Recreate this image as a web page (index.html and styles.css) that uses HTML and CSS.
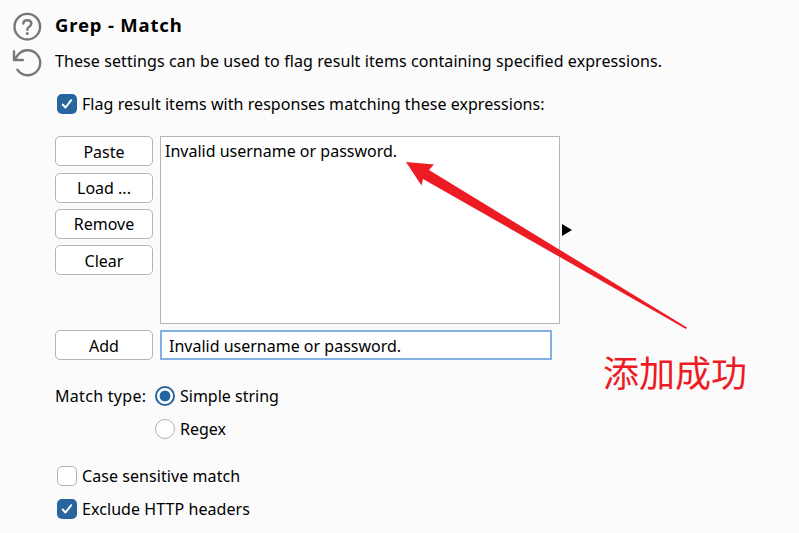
FILE: index.html
```html
<!DOCTYPE html>
<html lang="en">
<head>
<meta charset="utf-8">
<title>Grep - Match</title>
<link rel="stylesheet" href="styles.css">
</head>
<body>
<main class="panel">
  <aside class="tools">
    <svg class="tool" viewBox="0 0 30 30"><circle cx="15.300" cy="14.700" r="12.800"/><path d="M11.300 11.500C11.500 9.300 13 8.200 15.300 8.200c2.400 0 4 1.300 4 3.300 0 3.200-4 3-4 6.300"/><circle class="dot" cx="15.300" cy="21.400" r="1.500"/></svg>
    <svg class="tool" viewBox="0 0 30 30"><path d="M2 3.200v8.800h8.800M2.500 11.500L6.500 6.300A12.500 12.500 0 1 1 5.300 21.700"/></svg>
  </aside>
  <section class="content">
    <h1 class="title">Grep - Match</h1>
    <p class="intro">These settings can be used to flag result items containing specified expressions.</p>
    <div class="option flag"><span class="box checked"><svg viewBox="0 0 20 20"><path d="M5.700 10.500l2.800 3 5.700-7.300"/></svg></span><span class="label-flag">Flag result items with responses matching these expressions:</span></div>
    <div class="editor">
      <div class="buttons">
        <button class="btn paste">Paste</button>
        <button class="btn load">Load ...</button>
        <button class="btn remove">Remove</button>
        <button class="btn clear">Clear</button>
      </div>
      <div class="list"><span class="expr">Invalid username or password.</span></div>
      <svg class="expand" viewBox="0 0 10 12"><path d="M0 0l10 6-10 6z"/></svg>
    </div>
    <div class="entry">
      <button class="btn add">Add</button>
      <div class="field"><span class="expr">Invalid username or password.</span></div>
    </div>
    <div class="match">
      <span class="match-label">Match type:</span>
      <div class="radios">
        <div class="option"><span class="radio selected"></span><span class="label-simple">Simple string</span></div>
        <div class="option"><span class="radio"></span><span class="label-regex">Regex</span></div>
      </div>
    </div>
    <div class="checks">
      <div class="option"><span class="box"></span><span class="label-case">Case sensitive match</span></div>
      <div class="option"><span class="box checked"><svg viewBox="0 0 20 20"><path d="M5.700 10.500l2.800 3 5.700-7.300"/></svg></span><span class="label-exclude">Exclude HTTP headers</span></div>
    </div>
  </section>
  <svg class="arrow" viewBox="0 0 281 167"><path d="M0 0L28 2.500L23 8L281 165.500L280 167L17 17L15.500 23.500Z"/></svg>
  <div class="note" lang="zh-CN">添加成功</div>
</main>
</body>
</html>
```

FILE: styles.css
```css
* { box-sizing: border-box; }
body { margin: 0; background: #fbfbfb; color: #000; font: 16px/24px "Noto Sans", "Open Sans", sans-serif; }
.panel { position: relative; display: flex; width: 799px; height: 533px; overflow: hidden; }
.tools { display: flex; flex-direction: column; gap: 6px; width: 55px; padding: 12px 0 0 12px; }
.tool { width: 30px; height: 30px; fill: none; stroke: #777; stroke-width: 2.400; stroke-linecap: round; stroke-linejoin: round; }
.tool .dot { fill: #777; stroke: none; }
.content { width: 640px; padding-top: 13px; white-space: nowrap; }
.title { margin: 0; font-size: 18.500px; line-height: 24px; letter-spacing: .820px; }
.intro { margin: 12px 0 0; line-height: 24px; letter-spacing: .088px; }
.label-flag { letter-spacing: .05px; }
.label-case, .label-exclude { letter-spacing: .07px; }
.option { display: flex; align-items: center; gap: 5px; height: 24px; }
.flag { margin: 19px 0 0 2px; }
.box { flex: none; width: 20px; height: 20px; border: 1px solid #b3b0b1; border-radius: 5px; background: #fff; }
.box.checked { border: 0; background: #27659f; }
.box svg { display: block; fill: none; stroke: #fff; stroke-width: 2; stroke-linecap: round; stroke-linejoin: round; }
.editor { display: flex; margin-top: 20px; }
.buttons { display: flex; flex-direction: column; gap: 6px; width: 105px; }
.btn { display: block; width: 98px; height: 30px; padding: 2px 0 0; border: 1px solid #b8b4b6; border-radius: 5px; background: #fff; color: #000; font: inherit; line-height: 26px; }
.paste { margin-bottom: 1px; }
.load, .remove { padding: 0; }
.list { width: 400px; height: 188px; padding: 2px 4px; border: 1px solid #b8b4b6; background: #fff; }
.expand { width: 10px; height: 12px; margin: 88px 0 0 2px; fill: #000; }
.entry { display: flex; gap: 7px; margin-top: 6px; }
.field { width: 392px; height: 30px; padding: 2px 7px 0; border: 2px solid #82b0e2; background: #fff; }
.match { display: flex; margin-top: 24px; }
.match-label { width: 100px; letter-spacing: .3px; }
.radios { display: flex; flex-direction: column; gap: 9px; }
.radio { flex: none; width: 20px; height: 20px; border: 1px solid #b3b0b1; border-radius: 50%; background: #fff; }
.radio.selected { border: 2px solid #27659f; background: radial-gradient(circle, #27659f 5px, #fff 5.800px); }
.checks { display: flex; flex-direction: column; gap: 9px; margin: 23px 0 0 2px; }
.arrow { position: absolute; left: 406px; top: 162px; width: 281px; height: 167px; fill: #ed1c24; }
.note { position: absolute; left: 603px; top: 347px; color: #ed1c24; font: 36px/48px "Noto Sans CJK SC", sans-serif; white-space: nowrap; }
```
